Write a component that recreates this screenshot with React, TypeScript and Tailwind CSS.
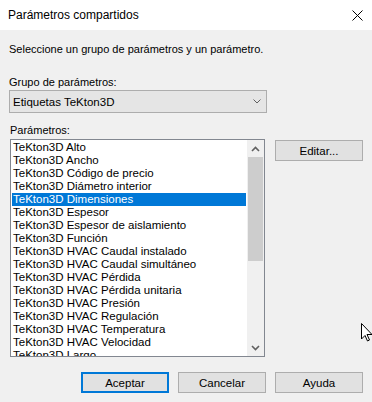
import React from 'react';

const items = [
  'TeKton3D Alto',
  'TeKton3D Ancho',
  'TeKton3D Código de precio',
  'TeKton3D Diámetro interior',
  'TeKton3D Dimensiones',
  'TeKton3D Espesor',
  'TeKton3D Espesor de aislamiento',
  'TeKton3D Función',
  'TeKton3D HVAC Caudal instalado',
  'TeKton3D HVAC Caudal simultáneo',
  'TeKton3D HVAC Pérdida',
  'TeKton3D HVAC Pérdida unitaria',
  'TeKton3D HVAC Presión',
  'TeKton3D HVAC Regulación',
  'TeKton3D HVAC Temperatura',
  'TeKton3D HVAC Velocidad',
  'TeKton3D Largo',
];

const selected = 4;

const Chevron = ({ up = false }: { up?: boolean }) => (
  <svg width="9" height="6" viewBox="0 0 9 6">
    <path
      d={up ? 'M1 5 L4.5 1.5 L8 5' : 'M1 1 L4.5 4.5 L8 1'}
      fill="none"
      stroke="#606060"
      strokeWidth="1.6"
    />
  </svg>
);

const Button = ({ label, primary = false }: { label: string; primary?: boolean }) => (
  <button
    className={`flex h-[21px] w-[88px] items-center justify-center bg-[#e1e1e1] text-[11.5px] text-black ${
      primary ? 'border-2 border-[#0078d7]' : 'border border-[#adadad]'
    }`}
  >
    {label}
  </button>
);

export default function App() {
  return (
    <div
      className="relative flex h-[402px] w-[372px] flex-col overflow-hidden bg-[#f0f0f0] text-[11px] leading-[16px] text-black"
      style={{ fontFamily: '"Segoe UI", "Liberation Sans", Arial, sans-serif' }}
    >
      {/* Title bar */}
      <div className="flex h-[30px] shrink-0 items-center justify-between bg-white pl-[8px] pr-[8px]">
        <span className="text-[12px]">Parámetros compartidos</span>
        <svg width="11" height="11" viewBox="0 0 11 11" className="mr-[1px]">
          <path d="M0.5 0.5 L10.5 10.5 M10.5 0.5 L0.5 10.5" stroke="#000" strokeWidth="1" />
        </svg>
      </div>

      <div className="flex flex-1 flex-col pl-[9px] pr-[9px]">
        <p className="mt-[11px]">Seleccione un grupo de parámetros y un parámetro.</p>

        <p className="mt-[17px]">Grupo de parámetros:</p>
        <div className="flex h-[23px] w-[258px] items-center justify-between border border-[#adadad] bg-[#e5e5e5] pl-[3px] pr-[5px] text-[11.5px]">
          <span>Etiquetas TeKton3D</span>
          <svg width="8" height="5" viewBox="0 0 8 5">
            <path d="M0.5 0.5 L4 4 L7.5 0.5" fill="none" stroke="#606060" strokeWidth="1" />
          </svg>
        </div>

        <p className="mt-[9px] pl-[1px]">Parámetros:</p>

        <div className="mt-[1px] flex gap-[10px] pl-[1px]">
          {/* List box */}
          <div className="flex h-[218px] w-[255px] border border-[#828790] bg-white">
            <div className="flex-1 overflow-hidden p-[1px] text-[11.5px] leading-[13px]">
              {items.map((it, i) => (
                <div
                  key={it}
                  className={`h-[13px] whitespace-nowrap pl-[1px] ${
                    i === selected ? 'bg-[#0078d7] text-white' : ''
                  }`}
                >
                  {it}
                </div>
              ))}
            </div>
            <div className="flex w-[17px] flex-col bg-[#f0f0f0]">
              <div className="flex h-[17px] items-center justify-center">
                <Chevron up />
              </div>
              <div className="flex-1 px-[1px]">
                <div className="h-[104px] bg-[#cdcdcd]" />
              </div>
              <div className="flex h-[17px] items-center justify-center">
                <Chevron />
              </div>
            </div>
          </div>

          <div className="pt-[1px]">
            <Button label="Editar..." />
          </div>
        </div>

        <div className="mt-[15px] flex justify-end gap-[9px]">
          <Button label="Aceptar" primary />
          <Button label="Cancelar" />
          <Button label="Ayuda" />
        </div>
      </div>

      {/* Mouse cursor */}
      <svg
        width="12"
        height="19"
        viewBox="0 0 12 19"
        className="absolute left-[361px] top-[323px]"
      >
        <path
          d="M0.5 0.5 L0.5 16 L4 12.5 L6.5 18 L8.5 17 L6 11.5 L11 11.5 Z"
          fill="#fff"
          stroke="#000"
          strokeWidth="1"
        />
      </svg>
    </div>
  );
}
